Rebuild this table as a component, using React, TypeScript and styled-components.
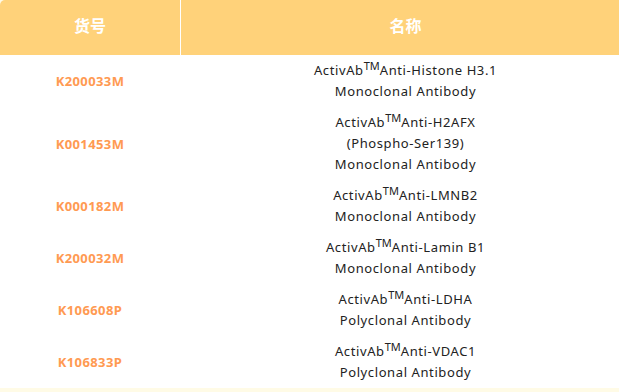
import React from "react";
import styled, { createGlobalStyle } from "styled-components";

const Global = createGlobalStyle`
  html, body { margin: 0; padding: 0; background: #fffbe6; overflow: hidden; }
  body { font-family: "Noto Sans", "Noto Sans CJK SC", sans-serif; }
`;

const Wrap = styled.div`
  width: 630px;
  height: 392px;
  background: #fffbe6;
`;

const Table = styled.div`
  display: grid;
  grid-template-columns: 180px 1fr;
  column-gap: 1px;
  background: #fff;
  border-top-left-radius: 5px;
  overflow: hidden;
`;

const HeadCell = styled.div`
  height: 55px;
  padding-bottom: 6px;
  box-sizing: border-box;
  background: #ffd27a;
  color: #fff;
  font-family: "Noto Sans CJK SC", sans-serif;
  font-weight: 700;
  font-size: 16px;
  display: flex;
  align-items: center;
  justify-content: center;
`;

const CodeCell = styled.div`
  display: flex;
  align-items: center;
  justify-content: center;
  color: #ff9a52;
  font-weight: 700;
  font-size: 13px;
  letter-spacing: 0.4px;
`;

const NameCell = styled.div`
  padding: 5px 0;
  text-align: center;
  color: #222;
  font-size: 13px;
  line-height: 21px;
  letter-spacing: 0.6px;
`;

const Line = styled.div`
  height: 21px;
`;

const Sup = styled.sup`
  font-size: 11px;
  line-height: 0;
  vertical-align: 0;
  position: relative;
  top: -5px;
  letter-spacing: 0;
`;

const rows: { code: string; lines: string[] }[] = [
  { code: "K200033M", lines: ["Anti-Histone H3.1", "Monoclonal Antibody"] },
  { code: "K001453M", lines: ["Anti-H2AFX", "(Phospho-Ser139)", "Monoclonal Antibody"] },
  { code: "K000182M", lines: ["Anti-LMNB2", "Monoclonal Antibody"] },
  { code: "K200032M", lines: ["Anti-Lamin B1", "Monoclonal Antibody"] },
  { code: "K106608P", lines: ["Anti-LDHA", "Polyclonal Antibody"] },
  { code: "K106833P", lines: ["Anti-VDAC1", "Polyclonal Antibody"] },
];

export default function App() {
  return (
    <Wrap>
      <Global />
      <Table>
        <HeadCell>货号</HeadCell>
        <HeadCell>名称</HeadCell>
        {rows.map((r) => (
          <React.Fragment key={r.code}>
            <CodeCell>{r.code}</CodeCell>
            <NameCell>
              {r.lines.map((l, i) => (
                <Line key={i}>
                  {i === 0 ? (
                    <>
                      ActivAb<Sup>TM</Sup>
                      {l}
                    </>
                  ) : (
                    l
                  )}
                </Line>
              ))}
            </NameCell>
          </React.Fragment>
        ))}
      </Table>
    </Wrap>
  );
}
